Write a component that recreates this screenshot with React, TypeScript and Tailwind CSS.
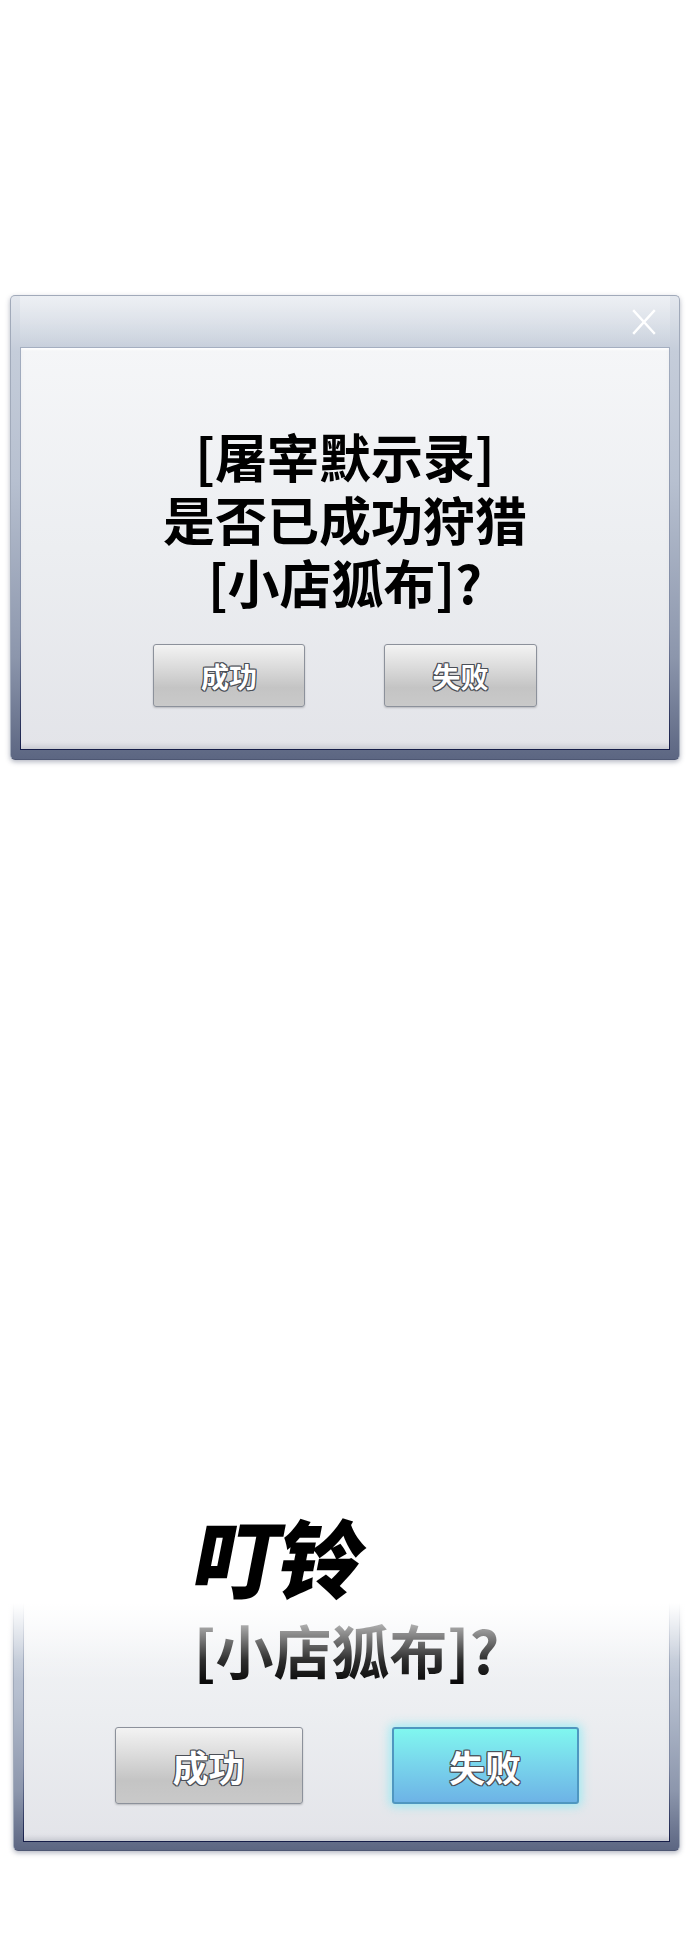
import React from 'react';

const cjk = "font-['Noto_Sans_CJK_SC','Noto_Sans',sans-serif]";

// white glyphs with a dark rim, as on the dialog buttons
const outlined =
  '[text-shadow:1px_1px_0_#4b4f57,-1px_-1px_0_#4b4f57,1px_-1px_0_#4b4f57,-1px_1px_0_#4b4f57,0_1px_0_#4b4f57,0_-1px_0_#4b4f57,1px_0_0_#4b4f57,-1px_0_0_#4b4f57]';

function GreyButton({ label, className }: { label: string; className: string }) {
  return (
    <button
      className={`${className} ${cjk} ${outlined} flex items-center justify-center rounded-[3px] border border-[#8c919b] bg-[linear-gradient(to_bottom,#f3f3f3_0%,#dcdcdc_35%,#c4c4c4_70%,#c9c9c9_100%)] font-bold text-white shadow-[0_1px_2px_rgba(0,0,0,0.2)]`}
    >
      {label}
    </button>
  );
}

function BlueButton({ label, className }: { label: string; className: string }) {
  return (
    <button
      className={`${className} ${cjk} ${outlined} flex items-center justify-center rounded-[3px] border-2 border-[#4f97c0] bg-[linear-gradient(to_bottom,#80f7ef_0%,#79d7ec_45%,#6db3e6_100%)] font-bold text-white shadow-[0_0_10px_3px_rgba(110,235,245,0.55)]`}
    >
      {label}
    </button>
  );
}

function CloseIcon() {
  return (
    <svg width="24" height="26" viewBox="0 0 24 26" fill="none">
      <path d="M2 2 L22 24 M22 2 L2 24" stroke="white" strokeWidth="2.4" strokeLinecap="square" />
    </svg>
  );
}

function Frame({ children, className }: { children: React.ReactNode; className: string }) {
  return (
    <div
      className={`${className} rounded-[5px] border border-[#a1aaba] border-b-[#4e5773] bg-[linear-gradient(to_bottom,#e4e8ee_0%,#c5cdda_12%,#b7c0d0_40%,#8c96ac_78%,#5c6682_100%)] shadow-[0_2px_5px_rgba(40,50,80,0.35)]`}
    >
      {children}
    </div>
  );
}

function Panel({ children, className }: { children: React.ReactNode; className: string }) {
  return (
    <div className="bg-[linear-gradient(to_bottom,#a4aec0,#7d88a2_70%,#141c48)] p-px">
      <div
        className={`${className} flex flex-col items-center bg-[linear-gradient(to_bottom,#f5f6f8,#eceef1_50%,#e3e4e9)] shadow-[inset_0_-5px_4px_-2px_rgba(120,125,140,0.25),inset_0_2px_2px_rgba(255,255,255,0.8)]`}
      >
        {children}
      </div>
    </div>
  );
}

const promptLines = ['[屠宰默示录]', '是否已成功狩猎', '[小店狐布]?'];

export default function App() {
  return (
    <div className="w-[690px] h-[1956px] overflow-hidden bg-white">
      <div className="pt-[295px]">
        {/* first prompt */}
        <Frame className="mx-[10px] px-[9px] pb-[9px]">
          <div className="flex h-[51px] items-center justify-end pr-[14px] bg-[linear-gradient(to_bottom,rgba(255,255,255,0.35),rgba(255,255,255,0))]">
            <CloseIcon />
          </div>
          <Panel className="h-[401px] pt-[76px]">
            {promptLines.map((line) => (
              <div
                key={line}
                className={`${cjk} h-[63px] text-center text-[52px] font-bold leading-[63px] text-black`}
              >
                {line}
              </div>
            ))}
            <div className="mt-[31px] flex gap-[79px]">
              <GreyButton label="成功" className="h-[63px] w-[152px] text-[28px]" />
              <GreyButton label="失败" className="h-[63px] w-[153px] text-[28px]" />
            </div>
          </Panel>
        </Frame>

        <div className="relative z-20 mt-[752px] h-[92px] pl-[196px]">
          <span
            className={`${cjk} inline-block -skew-x-[11deg] text-[86px] font-black leading-none tracking-[-2px] text-black`}
          >
            叮铃
          </span>
        </div>

        {/* same prompt, closer in */}
        <div className="relative -mt-[22px]">
          <Frame className="ml-[13px] mr-[10px] px-[9px] pb-[8px]">
            <Panel className="h-[257px] pt-[30px]">
              <p className={`${cjk} text-center text-[58px] font-bold leading-[70px] text-[#0a0a0a]`}>
                [小店狐布]?
              </p>
              <div className="mt-[43px] flex gap-[89px]">
                <GreyButton label="成功" className="h-[77px] w-[188px] text-[36px]" />
                <BlueButton label="失败" className="h-[77px] w-[187px] text-[36px]" />
              </div>
            </Panel>
          </Frame>
          <div className="pointer-events-none absolute inset-x-0 -top-[10px] z-10 h-[110px] bg-[linear-gradient(to_bottom,#fff_0%,#fff_28%,rgba(255,255,255,0.55)_55%,rgba(255,255,255,0.15)_80%,rgba(255,255,255,0)_100%)]" />
        </div>
      </div>
    </div>
  );
}
